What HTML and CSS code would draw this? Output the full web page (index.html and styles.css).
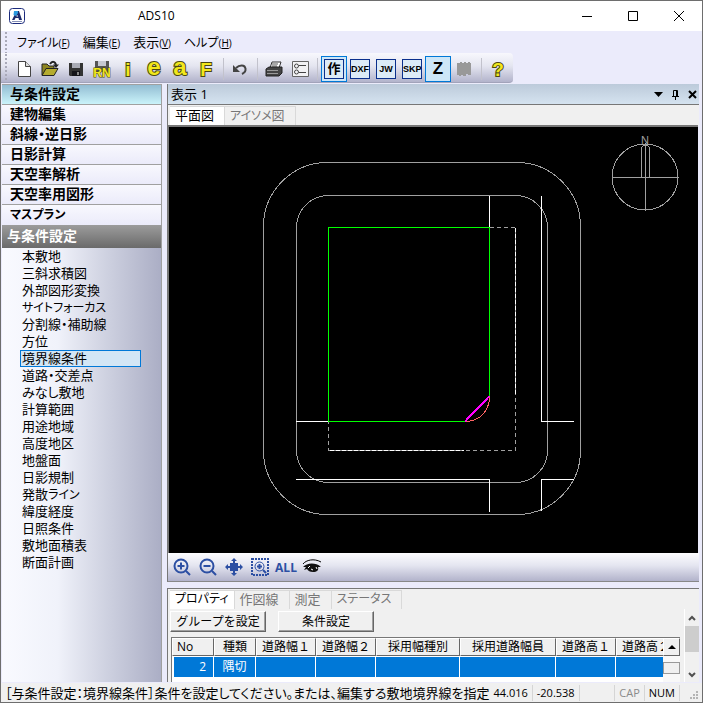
FILE: index.html
```html
<!DOCTYPE html>
<html lang="ja">
<head>
    <meta charset="utf-8">
    <title>ADS10</title>
    <link rel="stylesheet" href="styles.css">
</head>
<body>
<header class="titlebar">
    <svg class="logo" viewBox="0 0 16 16">
        <rect x="0.5" y="0.5" width="15" height="15" rx="3" fill="#fff" stroke="#1b2a7c"/>
        <path d="M7 3H10L13 12H10L9.500 10H6.500L5.500 12H3L6 6Z" fill="#1b2a6c"/>
        <path d="M5 3H9V5L7 8 4.500 7Z" fill="#2a9ae0"/>
        <path d="M7.500 8H9" stroke="#fff"/>
        <path d="M3 13.500H13" stroke="#8790b8"/>
    </svg>
    <h1>ADS10</h1>
    <div class="window-buttons">
        <button type="button" aria-label="最小化"><svg viewBox="0 0 12 12"><path d="M1 6.500H11"/></svg></button>
        <button type="button" aria-label="最大化"><svg viewBox="0 0 12 12"><path d="M1.500 1.500H10.500V10.500H1.500Z"/></svg></button>
        <button type="button" aria-label="閉じる"><svg viewBox="0 0 12 12"><path d="M1 1 11 11M11 1 1 11"/></svg></button>
    </div>
</header>

<nav class="menubar">
    <button type="button"><span class="kana">ファイル</span><small>(<u>F</u>)</small></button>
    <button type="button">編集<small>(<u>E</u>)</small></button>
    <button type="button">表示<small>(<u>V</u>)</small></button>
    <button type="button"><span class="kana">ヘルプ</span><small>(<u>H</u>)</small></button>
</nav>

<div class="toolbar">
    <button type="button" aria-label="新規">
        <svg viewBox="0 0 20 20"><path d="M4.500 2.500H11.500L16.500 7.500V17.500H4.500Z" fill="#fff" stroke="#444"/><path d="M11.500 2.500V7.500H16.500" fill="#ddd" stroke="#444"/></svg>
    </button>
    <button type="button" aria-label="開く">
        <svg viewBox="0 0 20 20"><path d="M2 16V5H7L9 7H14V10" fill="#8c8420" stroke="#222"/><path d="M2 16.500 6 9.500H18L14 16.500Z" fill="#b5ac2e" stroke="#222"/><path d="M10 5C12 2 15 2 16 6" fill="none" stroke="#222" stroke-width="2"/><path d="M13 5.500H19L16 9Z" fill="#222"/></svg>
    </button>
    <button type="button" aria-label="保存">
        <svg viewBox="0 0 20 20"><path d="M3 4H17V17H4L3 16Z" fill="#333"/><path d="M6 4H14V9H6Z" fill="#a9abb5"/><path d="M6 12H14V17H6Z" fill="#15151a"/><path d="M11 13H13V16H11Z" fill="#888"/></svg>
    </button>
    <button type="button" aria-label="名前を付けて保存">
        <svg viewBox="0 0 20 20"><path d="M3 2H17V13H3Z" fill="#555"/><path d="M6 2H14V7H6Z" fill="#c6c8d2"/><text class="mark rn" x="10" y="18" text-anchor="middle">RN</text></svg>
    </button>
    <button type="button" aria-label="情報"><svg viewBox="0 0 20 20"><text class="mark" x="10" y="17" text-anchor="middle">i</text></svg></button>
    <button type="button" aria-label="e"><svg viewBox="0 0 20 20"><text class="mark wide" x="10" y="16" text-anchor="middle">e</text></svg></button>
    <button type="button" aria-label="a"><svg viewBox="0 0 20 20"><text class="mark wide" x="10" y="16" text-anchor="middle">a</text></svg></button>
    <button type="button" aria-label="F"><svg viewBox="0 0 20 20"><text class="mark" x="10" y="17" text-anchor="middle">F</text></svg></button>
    <span class="sep"></span>
    <button type="button" aria-label="元に戻す">
        <svg viewBox="0 0 20 20"><path d="M6 9C9 6 15 5 15.500 10 16 13 14 14 12 15" fill="none" stroke="#444" stroke-width="2"/><path d="M3 6V13H10Z" fill="#444"/></svg>
    </button>
    <span class="sep"></span>
    <button type="button" aria-label="印刷">
        <svg viewBox="0 0 20 20"><path d="M6 9 8 3H17L15 9Z" fill="#fff" stroke="#333"/><path d="M8 5H14M8 7H13" stroke="#555"/><path d="M2 10 5 8H18V14L15 17H2Z" fill="#444" stroke="#222"/><path d="M3 11.500H14M3 14.500H14" stroke="#999"/></svg>
    </button>
    <button type="button" aria-label="設定一覧">
        <svg viewBox="0 0 20 20"><path d="M2.500 2.500H18.500V17.500H2.500Z" fill="#f2f2f4" stroke="#666"/><circle cx="6.500" cy="7" r="2" fill="none" stroke="#444"/><circle cx="6.500" cy="13" r="2" fill="none" stroke="#444"/><path d="M9 6.500H16M9 13.500H16" stroke="#444"/></svg>
    </button>
    <span class="sep"></span>
    <button type="button" class="on"><span class="tag">作</span></button>
    <button type="button"><span class="tag">DXF</span></button>
    <button type="button"><span class="tag">JW</span></button>
    <button type="button"><span class="tag">SKP</span></button>
    <button type="button" class="on z">Z</button>
    <button type="button" aria-label="ビル" disabled>
        <svg viewBox="0 0 20 20"><path d="M3 4H6V3H8V4H10V3H12V4H14V3H16V4H17V16H14V15H12V17H9V16H7V17H5V16H3Z" fill="#999"/></svg>
    </button>
    <span class="sep"></span>
    <button type="button" aria-label="ヘルプ"><svg viewBox="0 0 20 20"><text class="mark" x="10" y="17" text-anchor="middle">?</text></svg></button>
</div>

<main>
    <aside>
        <nav class="categories">
            <button type="button" class="current">与条件設定</button>
            <button type="button">建物編集</button>
            <button type="button">斜線・逆日影</button>
            <button type="button">日影計算</button>
            <button type="button">天空率解析</button>
            <button type="button">天空率用図形</button>
            <button type="button"><span class="kana">マスプラン</span></button>
        </nav>
        <h2>与条件設定</h2>
        <ul class="tree">
            <li><a href="#">本敷地</a></li>
            <li><a href="#">三斜求積図</a></li>
            <li><a href="#">外部図形変換</a></li>
            <li><a href="#" class="kana">サイトフォーカス</a></li>
            <li><a href="#">分割線・補助線</a></li>
            <li><a href="#">方位</a></li>
            <li><a href="#" class="selected">境界線条件</a></li>
            <li><a href="#">道路・交差点</a></li>
            <li><a href="#">みなし敷地</a></li>
            <li><a href="#">計算範囲</a></li>
            <li><a href="#">用途地域</a></li>
            <li><a href="#">高度地区</a></li>
            <li><a href="#">地盤面</a></li>
            <li><a href="#">日影規制</a></li>
            <li><a href="#">発散<span class="kana">ライン</span></a></li>
            <li><a href="#">緯度経度</a></li>
            <li><a href="#">日照条件</a></li>
            <li><a href="#">敷地面積表</a></li>
            <li><a href="#">断面計画</a></li>
        </ul>
    </aside>

    <div class="work">
        <section class="view">
            <div class="view-title">
                <h2>表示 1</h2>
                <button type="button" aria-label="メニュー"><svg viewBox="0 0 11 11"><path d="M1 3H10L5.500 8Z" fill="#000"/></svg></button>
                <button type="button" aria-label="固定"><svg viewBox="0 0 11 11"><path d="M3.500 7V1.500H7.500V7M2 7.500H9M5.500 8V11" fill="none" stroke="#000"/><path d="M6.500 2V7" stroke="#000"/></svg></button>
                <button type="button" aria-label="閉じる"><svg viewBox="0 0 11 11"><path d="M2 2 9 9M9 2 2 9" stroke="#000" stroke-width="2"/></svg></button>
            </div>
            <div class="tabs">
                <button type="button" class="active">平面図</button>
                <button type="button"><span class="kana">アイソメ</span>図</button>
            </div>
            <div class="canvas">
                <svg viewBox="169 127 529 426" shape-rendering="crispEdges">
                    <!-- outer and inner offset lines -->
                    <g fill="none" stroke="#a0a0a0">
                        <rect x="263.500" y="162.500" width="317" height="352" rx="64"/>
                        <rect x="296.500" y="195.500" width="251" height="287" rx="32"/>
                        <path d="M490 227.500H515.500V450.500H328.500V422" stroke-dasharray="4 3"/>
                        <path d="M515.500 228V394M330 450.500H464"/>
                    </g>
                    <!-- roads -->
                    <g fill="none" stroke="#fff">
                        <path d="M515.500 228V394M330 450.500H464" stroke-dasharray="4 2"/>
                        <path d="M489.500 196V227M541.500 196V421.500H574M296 421.500H328M296 479.500H489.500V512M541.500 511V479.500H574"/>
                    </g>
                    <!-- site -->
                    <path d="M489.500 396V227.500H328.500V421.500H465" fill="none" stroke="#0f0"/>
                    <path d="M489.500 396C489.500 412 479 421.500 465 421.500" fill="none" stroke="#ff6464"/>
                    <path d="M489.500 396 465 421.500" stroke="#f0f" stroke-width="2"/>
                    <!-- compass -->
                    <g fill="none" stroke="#a0a0a0">
                        <circle cx="645" cy="177" r="33"/>
                        <path d="M612 177.500H679M645.500 144V211M641.500 147V177M649.500 147V177M641 148 645.500 144 650 148"/>
                    </g>
                    <text class="north" x="645" y="144" text-anchor="middle">N</text>
                </svg>
            </div>
            <div class="zoombar">
                <button type="button" aria-label="拡大"><svg viewBox="0 0 20 20"><circle cx="9" cy="9" r="6.500" fill="none"/><path d="M5.500 9H12.500M9 5.500V12.500M14 14 18 18"/></svg></button>
                <button type="button" aria-label="縮小"><svg viewBox="0 0 20 20"><circle cx="9" cy="9" r="6.500" fill="none"/><path d="M5.500 9H12.500M14 14 18 18"/></svg></button>
                <button type="button" aria-label="移動"><svg viewBox="0 0 20 20"><path class="solid" d="M6 6H14V14H6ZM10 1 13 4H7ZM10 19 7 16H13ZM1 10 4 7V13ZM19 10 16 13V7Z"/><path d="M4 10H16M10 4V16"/></svg></button>
                <button type="button" aria-label="範囲拡大"><svg viewBox="0 0 20 20"><path d="M2 2H18V18H2Z" fill="none" stroke-dasharray="2 1"/><circle class="thin" cx="9.500" cy="9.500" r="4.500" fill="none"/><path d="M7 9.500H12M9.500 7V12M13 13 16 16"/></svg></button>
                <button type="button" class="all">ALL</button>
                <button type="button" aria-label="表示切替"><svg viewBox="0 0 20 20"><path d="M1 7C4 3 12 1 19 5" fill="none" stroke="#000" stroke-width="1"/><path d="M1 10C5 6 13 5 19 10L16 10C17 13 15 15 11 15 8 15 6 14 5 12L2 13 4 10Z" fill="#111" stroke="none"/><path d="M6 11 8 9M14 10 15 12M9 12 11 13" stroke="#fff" stroke-width="1"/></svg></button>
            </div>
        </section>

        <section class="props">
            <div class="tabs">
                <button type="button" class="active kana">プロパティ</button>
                <button type="button">作図線</button>
                <button type="button">測定</button>
                <button type="button" class="kana">ステータス</button>
            </div>
            <div class="props-body">
                <div class="props-main">
                    <div class="actions">
                        <button type="button">グループを設定</button>
                        <button type="button">条件設定</button>
                    </div>
                    <div class="grid">
                        <div class="grid-view">
                            <table>
                                <colgroup>
                                    <col class="c-no"><col class="c-kind"><col class="c-road"><col class="c-road"><col class="c-type"><col class="c-width"><col class="c-road"><col class="c-road">
                                </colgroup>
                                <thead>
                                    <tr><th>No</th><th>種類</th><th>道路幅１</th><th>道路幅２</th><th>採用幅種別</th><th>採用道路幅員</th><th>道路高１</th><th>道路高２</th></tr>
                                </thead>
                                <tbody>
                                    <tr><td>2</td><td>隅切</td><td></td><td></td><td></td><td></td><td></td><td></td></tr>
                                </tbody>
                            </table>
                        </div>
                        <div class="grid-scroll">
                            <button type="button" aria-label="上へ"><svg viewBox="0 0 8 4"><path d="M0 4 4 0 8 4Z"/></svg></button>
                            <span class="grid-thumb"></span>
                        </div>
                    </div>
                </div>
                <div class="scrollbar">
                    <svg viewBox="0 0 8 6"><path d="M1 5 4 2 7 5"/></svg>
                    <span class="thumb"></span>
                    <svg viewBox="0 0 8 6"><path d="M1 1 4 4 7 1"/></svg>
                </div>
            </div>
        </section>
    </div>
</main>

<footer class="statusbar">
    <span class="message">［与条件設定：境界線条件］条件を設定してください。または、編集する敷地境界線を指定</span>
    <span class="coord">44.016</span>
    <span class="coord">-20.538</span>
    <span class="blank"></span>
    <span class="key off">CAP</span>
    <span class="key">NUM</span>
    <svg class="grip" viewBox="0 0 10 10"><path d="M7 1H9V3H7ZM4 4H6V6H4ZM7 4H9V6H7ZM1 7H3V9H1ZM4 7H6V9H4ZM7 7H9V9H7Z" fill="#b4b4b4"/></svg>
</footer>
</body>
</html>
```

FILE: styles.css
```css
* {
    box-sizing: border-box;
}

body {
    margin: 0;
    height: 100vh;
    min-height: 600px;
    display: flex;
    flex-direction: column;
    border: 1px solid #6e6e6e;
    background-color: #ebebfb;
    color: #000;
    font: 13px/16px "Open Sans", "Noto Sans CJK JP", sans-serif;
    font-feature-settings: "palt";
    overflow: hidden;
}

button {
    margin: 0;
    padding: 0;
    border: 0;
    background: none;
    color: inherit;
    font: inherit;
    font-feature-settings: inherit;
    white-space: nowrap;
}

h1, h2 {
    margin: 0;
    font-size: 13px;
    font-weight: normal;
}

.kana {
    font-size: 12px;
}

/* title bar */
.titlebar {
    display: flex;
    align-items: center;
    height: 30px;
    flex: none;
    padding-left: 8px;
    background-color: #fff;
}

.logo {
    width: 16px;
    height: 16px;
}

.titlebar h1 {
    flex: 1;
    padding-left: 113px;
    font-size: 12px;
}

.window-buttons {
    display: flex;
}

.window-buttons button {
    display: grid;
    place-items: center;
    width: 46px;
    height: 30px;
}

.window-buttons svg {
    width: 12px;
    height: 12px;
    fill: none;
    stroke: #000;
}

/* menu */
.menubar {
    display: flex;
    gap: 13px;
    flex: none;
    height: 22px;
    padding-left: 16px;
    background: radial-gradient(circle, #a9a9b8 1px, transparent 1px) 3px 4px / 4px 4px repeat-y;
}

.menubar small {
    font-size: 10px;
}

/* toolbar */
.toolbar {
    display: flex;
    align-items: center;
    align-self: flex-start;
    flex: none;
    height: 30px;
    padding: 2px 2px 0 10px;
    border-bottom: 1px solid #a2a3ba;
    border-radius: 0 4px 4px 0;
    background: radial-gradient(circle, #a9a9b8 1px, transparent 1px) 3px 4px / 4px 4px repeat-y,
        linear-gradient(#f8f8fd, #e4e5f0 45%, #b2b3cb);
}

.toolbar button {
    display: grid;
    place-items: center;
    width: 26px;
    height: 26px;
}

.toolbar svg {
    width: 20px;
    height: 20px;
    overflow: visible;
}

.toolbar .on {
    border: 1px solid #0078d7;
    background-color: #cde6f7;
}

.sep {
    width: 1px;
    height: 22px;
    margin: 0 3px 0 4px;
    background-color: #c2c2cc;
}

.tag {
    width: 20px;
    height: 20px;
    border: 1px solid #0a2f8c;
    background-color: #dcebf7;
    font: bold 9px/18px "Liberation Sans", "Noto Sans CJK JP", sans-serif;
    text-align: center;
}

.on .tag {
    font-size: 13px;
}

.toolbar .z {
    font: bold 17px/24px "Liberation Sans", sans-serif;
}

.mark {
    fill: #f2e71c;
    stroke: #4a4710;
    stroke-width: 2px;
    paint-order: stroke;
    font: bold 19px "Liberation Sans", sans-serif;
}

.mark.wide {
    font-size: 24px;
}

.mark.rn {
    font-size: 12px;
    stroke-width: 1px;
}

/* main area */
main {
    display: flex;
    flex: 1;
    min-height: 0;
    gap: 5px;
    padding: 1px 3px 1px 1px;
}

aside {
    display: flex;
    flex-direction: column;
    flex: none;
    width: 160px;
    border-right: 1px solid #a0a0a0;
}

.categories {
    display: flex;
    flex-direction: column;
    height: 141px;
    border-top: 1px solid #a0a0a0;
}

.categories button {
    height: 20px;
    padding: 0 0 2px 8px;
    border-bottom: 1px solid #a0a0a0;
    background: linear-gradient(#f8f8fe, #ebebfa);
    font-size: 14px;
    line-height: 16px;
    font-weight: bold;
    text-align: left;
}

.categories .current {
    background: linear-gradient(#93bdd3, #caf3fa);
}

.categories button:last-child {
    border-bottom: 0;
}

aside h2 {
    height: 23px;
    padding-left: 5px;
    background: linear-gradient(#9c9c9c, #6a6a6a);
    color: #fff;
    font-size: 14px;
    line-height: 22px;
    font-weight: bold;
}

.tree {
    flex: 1;
    margin: 0;
    padding: 0 20px 0 18px;
    list-style: none;
    background: linear-gradient(to right, #f9faff, #f0f2fa 35%, #cfd2e1 65%, #abaec5);
}

.tree a {
    display: block;
    height: 17px;
    padding-left: 1px;
    border: 1px solid transparent;
    color: #000;
    line-height: 15px;
    text-decoration: none;
}

.tree .selected {
    border-color: #0078d7;
    background-color: #d3e6f5;
}

.work {
    display: flex;
    flex: 1;
    flex-direction: column;
    gap: 6px;
    min-width: 0;
}

.view {
    display: flex;
    flex: 1;
    flex-direction: column;
    min-height: 0;
    border-left: 1px solid #777;
    border-bottom: 1px solid #888;
}

.view-title {
    display: flex;
    align-items: center;
    gap: 6px;
    height: 21px;
    padding: 0 1px 0 3px;
    border-bottom: 1px solid #777;
    background: linear-gradient(#bccada, #d5e3f0);
}

.view-title h2 {
    flex: 1;
    line-height: 18px;
}

.view-title button,
.view-title svg {
    display: block;
    width: 11px;
    height: 11px;
}

.tabs {
    display: flex;
    flex: none;
    height: 20px;
    padding: 1px 0 0 2px;
    background-color: #f0f0f0;
}

.tabs button {
    padding: 0 10px 2px 5px;
    border: 1px solid #d9d9d9;
    border-width: 1px 1px 0 0;
    color: #777;
    line-height: 16px;
}

.tabs .active {
    background-color: #fff;
    color: #000;
}

.tabs .active.kana {
    padding-right: 5px;
}

.canvas {
    flex: 1;
    min-height: 0;
    margin-right: 1px;
    border: 2px solid #777;
    border-width: 2px 0 0 1px;
    background-color: #000;
}

.canvas svg {
    display: block;
    width: 100%;
    height: 100%;
}

.north {
    fill: #a0a0a0;
    font: 11px "Liberation Sans", sans-serif;
}

.zoombar {
    display: flex;
    align-items: center;
    flex: none;
    height: 28px;
    padding-left: 1px;
    background: linear-gradient(#fdfdff, #e4e5f0 45%, #b2b3cb);
}

.zoombar button {
    display: grid;
    place-items: center;
    width: 26px;
    height: 26px;
}

.zoombar svg {
    width: 20px;
    height: 20px;
    stroke: #2c4fa3;
    stroke-width: 2px;
}

.zoombar .solid {
    fill: #2c4fa3;
    stroke: none;
}

.zoombar .thin {
    stroke-width: 1px;
}

.zoombar .all {
    color: #2c4fa3;
    font: bold 12px "Open Sans", sans-serif;
}

/* properties */
.props {
    flex: none;
    height: 94px;
    border: 1px solid #777;
    border-width: 1px 0 0 1px;
    background-color: #f0f0f0;
}

.props-body {
    display: flex;
    gap: 4px;
    height: 73px;
}

.props-main {
    display: flex;
    flex: 1;
    flex-direction: column;
    gap: 5px;
    min-width: 0;
    padding: 2px 0 0 2px;
}

.actions {
    display: flex;
    gap: 12px;
}

.actions button {
    width: 96px;
    height: 21px;
    border: 1px solid;
    border-color: #fff #666 #666 #fff;
    box-shadow: inset -1px -1px #a0a0a0;
    font-size: 12px;
    font-feature-settings: normal;
}

.grid {
    display: flex;
    flex: 1;
    min-height: 0;
    margin-left: 1px;
    border: 1px solid #777;
    border-width: 1px 0 0 1px;
    background-color: #fff;
}

.grid-view {
    flex: 1;
    min-width: 0;
    overflow: hidden;
}

table {
    width: 504px;
    border-collapse: separate;
    border-spacing: 0;
    table-layout: fixed;
    font-size: 12px;
    font-feature-settings: normal;
}

.c-no,
.c-kind {
    width: 42px;
}

.c-road {
    width: 60px;
}

.c-type {
    width: 84px;
}

.c-width {
    width: 96px;
}

th {
    height: 18px;
    padding: 0;
    border: 1px solid;
    border-color: #fff #666 #666 #fff;
    background-color: #f0f0f0;
    font-weight: normal;
    line-height: 14px;
}

th:first-child {
    padding-left: 4px;
    text-align: left;
}

td {
    height: 22px;
    padding: 0;
    border: 1px solid #fff;
    border-width: 1px 1px 1px 0;
    background-color: #0078d7;
    color: #fff;
    line-height: 18px;
    text-align: center;
}

td:first-child {
    padding-right: 7px;
    border-left-width: 2px;
    text-align: right;
}

.grid-scroll {
    display: flex;
    flex: none;
    flex-direction: column;
    gap: 6px;
    width: 17px;
    background-color: #f8f8f8;
}

.grid-scroll button {
    display: grid;
    place-items: center;
    height: 18px;
    border: 1px solid;
    border-color: #fff #666 #666 #fff;
    background-color: #f0f0f0;
}

.grid-scroll svg {
    width: 8px;
    height: 4px;
}

.grid-thumb {
    height: 12px;
    border: 1px solid #999;
    background-color: #f0f0f0;
}

.scrollbar {
    display: flex;
    flex: none;
    flex-direction: column;
    align-items: center;
    width: 15px;
    padding: 6px 0 4px;
    border-left: 1px solid #fff;
}

.scrollbar svg {
    width: 8px;
    height: 6px;
    fill: none;
    stroke: #505050;
    stroke-width: 2px;
}

.scrollbar .thumb {
    width: 100%;
    height: 26px;
    margin: 5px 0 auto;
    background-color: #cdcdcd;
}

/* status bar */
.statusbar {
    display: flex;
    align-items: center;
    flex: none;
    height: 19px;
    padding-left: 4px;
    background-color: #f0f0f0;
    white-space: nowrap;
}

.message {
    flex: none;
}

.coord,
.key {
    padding: 0 4px;
    border-right: 1px solid #d5d5d5;
    font-size: 11px;
}

.blank {
    flex: 1;
    height: 16px;
    border-right: 1px solid #d5d5d5;
}

.off {
    color: #8a8a8a;
}

.grip {
    flex: none;
    width: 10px;
    height: 10px;
    margin: 4px 3px 0 9px;
}
```
